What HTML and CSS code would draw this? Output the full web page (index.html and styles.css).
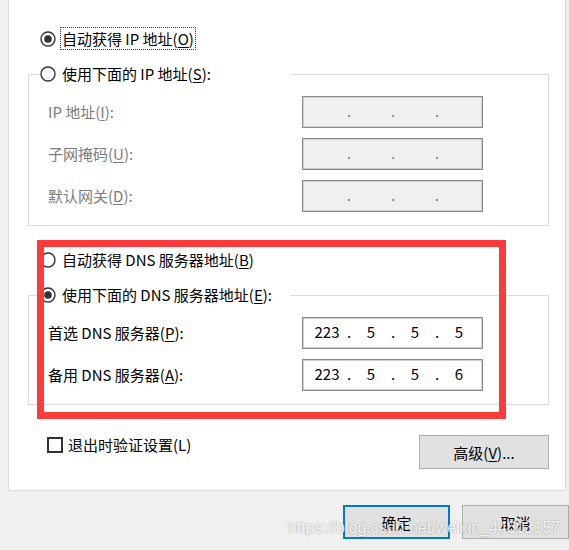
FILE: index.html
```html
<!doctype html>
<html>
<head>
<meta charset="utf-8">
<title>Internet 协议版本 4 (TCP/IPv4) 属性</title>
<link rel="stylesheet" href="styles.css">
</head>
<body>
<div class="sheet">
    <div class="radio top">
        <svg class="rb" width="16" height="16" viewBox="0 0 16 16"><circle cx="8" cy="8" r="7" fill="#fff" stroke="#333" stroke-width="1.4"/><circle cx="8" cy="8" r="3.8" fill="#333"/></svg>
        <span class="focus">自动获得 IP 地址(<u>O</u>)</span>
    </div>
    <fieldset class="group">
        <legend>
            <span class="radio">
                <svg class="rb" width="16" height="16" viewBox="0 0 16 16"><circle cx="8" cy="8" r="7" fill="#fff" stroke="#333" stroke-width="1.4"/></svg>
                <span class="text">使用下面的 IP 地址(<u>S</u>):</span>
            </span>
        </legend>
        <div class="rows">
            <div class="row off">
                <span class="label">IP 地址(<u>I</u>):</span>
                <span class="ip"><span class="seg"></span><span class="dot">.</span><span class="seg"></span><span class="dot">.</span><span class="seg"></span><span class="dot">.</span><span class="seg"></span></span>
            </div>
            <div class="row off">
                <span class="label">子网掩码(<u>U</u>):</span>
                <span class="ip"><span class="seg"></span><span class="dot">.</span><span class="seg"></span><span class="dot">.</span><span class="seg"></span><span class="dot">.</span><span class="seg"></span></span>
            </div>
            <div class="row off">
                <span class="label">默认网关(<u>D</u>):</span>
                <span class="ip"><span class="seg"></span><span class="dot">.</span><span class="seg"></span><span class="dot">.</span><span class="seg"></span><span class="dot">.</span><span class="seg"></span></span>
            </div>
        </div>
    </fieldset>

    <div class="radio dns">
        <svg class="rb" width="16" height="16" viewBox="0 0 16 16"><circle cx="8" cy="8" r="7" fill="#fff" stroke="#333" stroke-width="1.4"/></svg>
        <span class="text">自动获得 DNS 服务器地址(<u>B</u>)</span>
    </div>
    <fieldset class="group second">
        <legend>
            <span class="radio">
                <svg class="rb" width="16" height="16" viewBox="0 0 16 16"><circle cx="8" cy="8" r="7" fill="#fff" stroke="#333" stroke-width="1.4"/><circle cx="8" cy="8" r="3.8" fill="#333"/></svg>
                <span class="text">使用下面的 DNS 服务器地址(<u>E</u>):</span>
            </span>
        </legend>
        <div class="rows">
            <div class="row">
                <span class="label">首选 DNS 服务器(<u>P</u>):</span>
                <span class="ip"><span class="seg">223</span><span class="dot">.</span><span class="seg">5</span><span class="dot">.</span><span class="seg">5</span><span class="dot">.</span><span class="seg">5</span></span>
            </div>
            <div class="row">
                <span class="label">备用 DNS 服务器(<u>A</u>):</span>
                <span class="ip"><span class="seg">223</span><span class="dot">.</span><span class="seg">5</span><span class="dot">.</span><span class="seg">5</span><span class="dot">.</span><span class="seg">6</span></span>
            </div>
        </div>
    </fieldset>

    <div class="options">
        <label class="check"><span class="box"></span>退出时验证设置(L)</label>
        <button class="btn adv">高级(<u>V</u>)...</button>
    </div>
</div>

<div class="footer">
    <button class="btn ok">确定</button>
    <button class="btn">取消</button>
</div>

<div class="mark"></div>
<div class="watermark">https://blog.csdn.net/weixin_44603157</div>
</body>
</html>
```

FILE: styles.css
```css
body{
    margin: 0;
    background-color: #f0f0f0;
    font-family: "Noto Sans CJK SC", "Microsoft YaHei", sans-serif;
    font-size: 15px;
    color: #000;
}
u{
    text-underline-offset: 2px;
}

.sheet{
    width: 521px;
    margin-left: 8px;
    padding: 27px 16px 21px 19px;
    background-color: #fff;
    border-left: 1px solid #dadada;
    border-right: 1px solid #dadada;
    border-bottom: 1px solid #dadada;
}

.radio{
    display: flex;
    align-items: center;
    height: 24px;
    line-height: 22px;
    white-space: nowrap;
}
.radio .rb{
    flex: none;
    margin-right: 4px;
}
.radio.top{
    height: 23px;
    margin-left: 12px;
}
.radio .focus{
    border: 1px dotted #333;
    padding: 0 1px;
    line-height: 21px;
}
.radio .text{
    padding-left: 2px;
}
.radio.dns{
    margin: 22px 0 0 12px;
}

.group{
    margin: 12px 0 0 0;
    padding: 0;
    border: 1px solid #dcdcdc;
    min-width: 0;
}
.group.second{
    margin-top: 11px;
}
.group legend{
    width: 250px;
    margin-left: 11px;
    padding: 0;
}
.group .rows{
    display: flex;
    flex-direction: column;
    gap: 10px;
    padding: 10px 0 13px 19px;
}
.row{
    display: grid;
    grid-template-columns: 254px 181px;
    align-items: center;
    height: 32px;
}
.row .label{
    line-height: 22px;
}
.ip{
    display: flex;
    height: 32px;
    box-sizing: border-box;
    padding-left: 6px;
    border: 1px solid #8a8a8a;
    box-shadow: inset 0 0 0 1px #d0d0d0;
    background-color: #fff;
    line-height: 28px;
}
.ip .seg{
    width: 36px;
    text-align: center;
}
.ip .dot{
    width: 8px;
    text-align: center;
}
.row.off .label{
    color: #7c7c7c;
}
.row.off .ip{
    background-color: #f0f0f0;
    color: #7c7c7c;
}

.options{
    display: flex;
    justify-content: space-between;
    align-items: flex-start;
    margin-top: 30px;
}
.check{
    display: flex;
    align-items: center;
    margin-left: 19px;
    line-height: 20px;
}
.check .box{
    width: 16px;
    height: 16px;
    box-sizing: border-box;
    border: 2px solid #333;
    margin-right: 5px;
}

.btn{
    height: 34px;
    width: 107px;
    padding: 0;
    font-family: inherit;
    font-size: 15px;
    color: #000;
    background-color: #e1e1e1;
    border: 1px solid #adadad;
}
.btn.adv{
    width: 130px;
}
.btn.ok{
    border: 2px solid #0078d7;
}

.footer{
    display: flex;
    justify-content: flex-end;
    gap: 12px;
    padding-top: 14px;
}

/* annotation + watermark drawn over the dialog */
.mark{
    position: absolute;
    left: 37px;
    top: 240px;
    width: 469px;
    height: 179px;
    box-sizing: border-box;
    border: 7px solid #fd3b3b;
}
.watermark{
    position: absolute;
    left: 288px;
    top: 519px;
    font-family: "Liberation Sans", Arial, sans-serif;
    font-size: 16px;
    color: rgba(255,255,255,0.85);
    text-shadow: 0 0 2px rgba(0,0,0,0.35);
    white-space: nowrap;
}
```
